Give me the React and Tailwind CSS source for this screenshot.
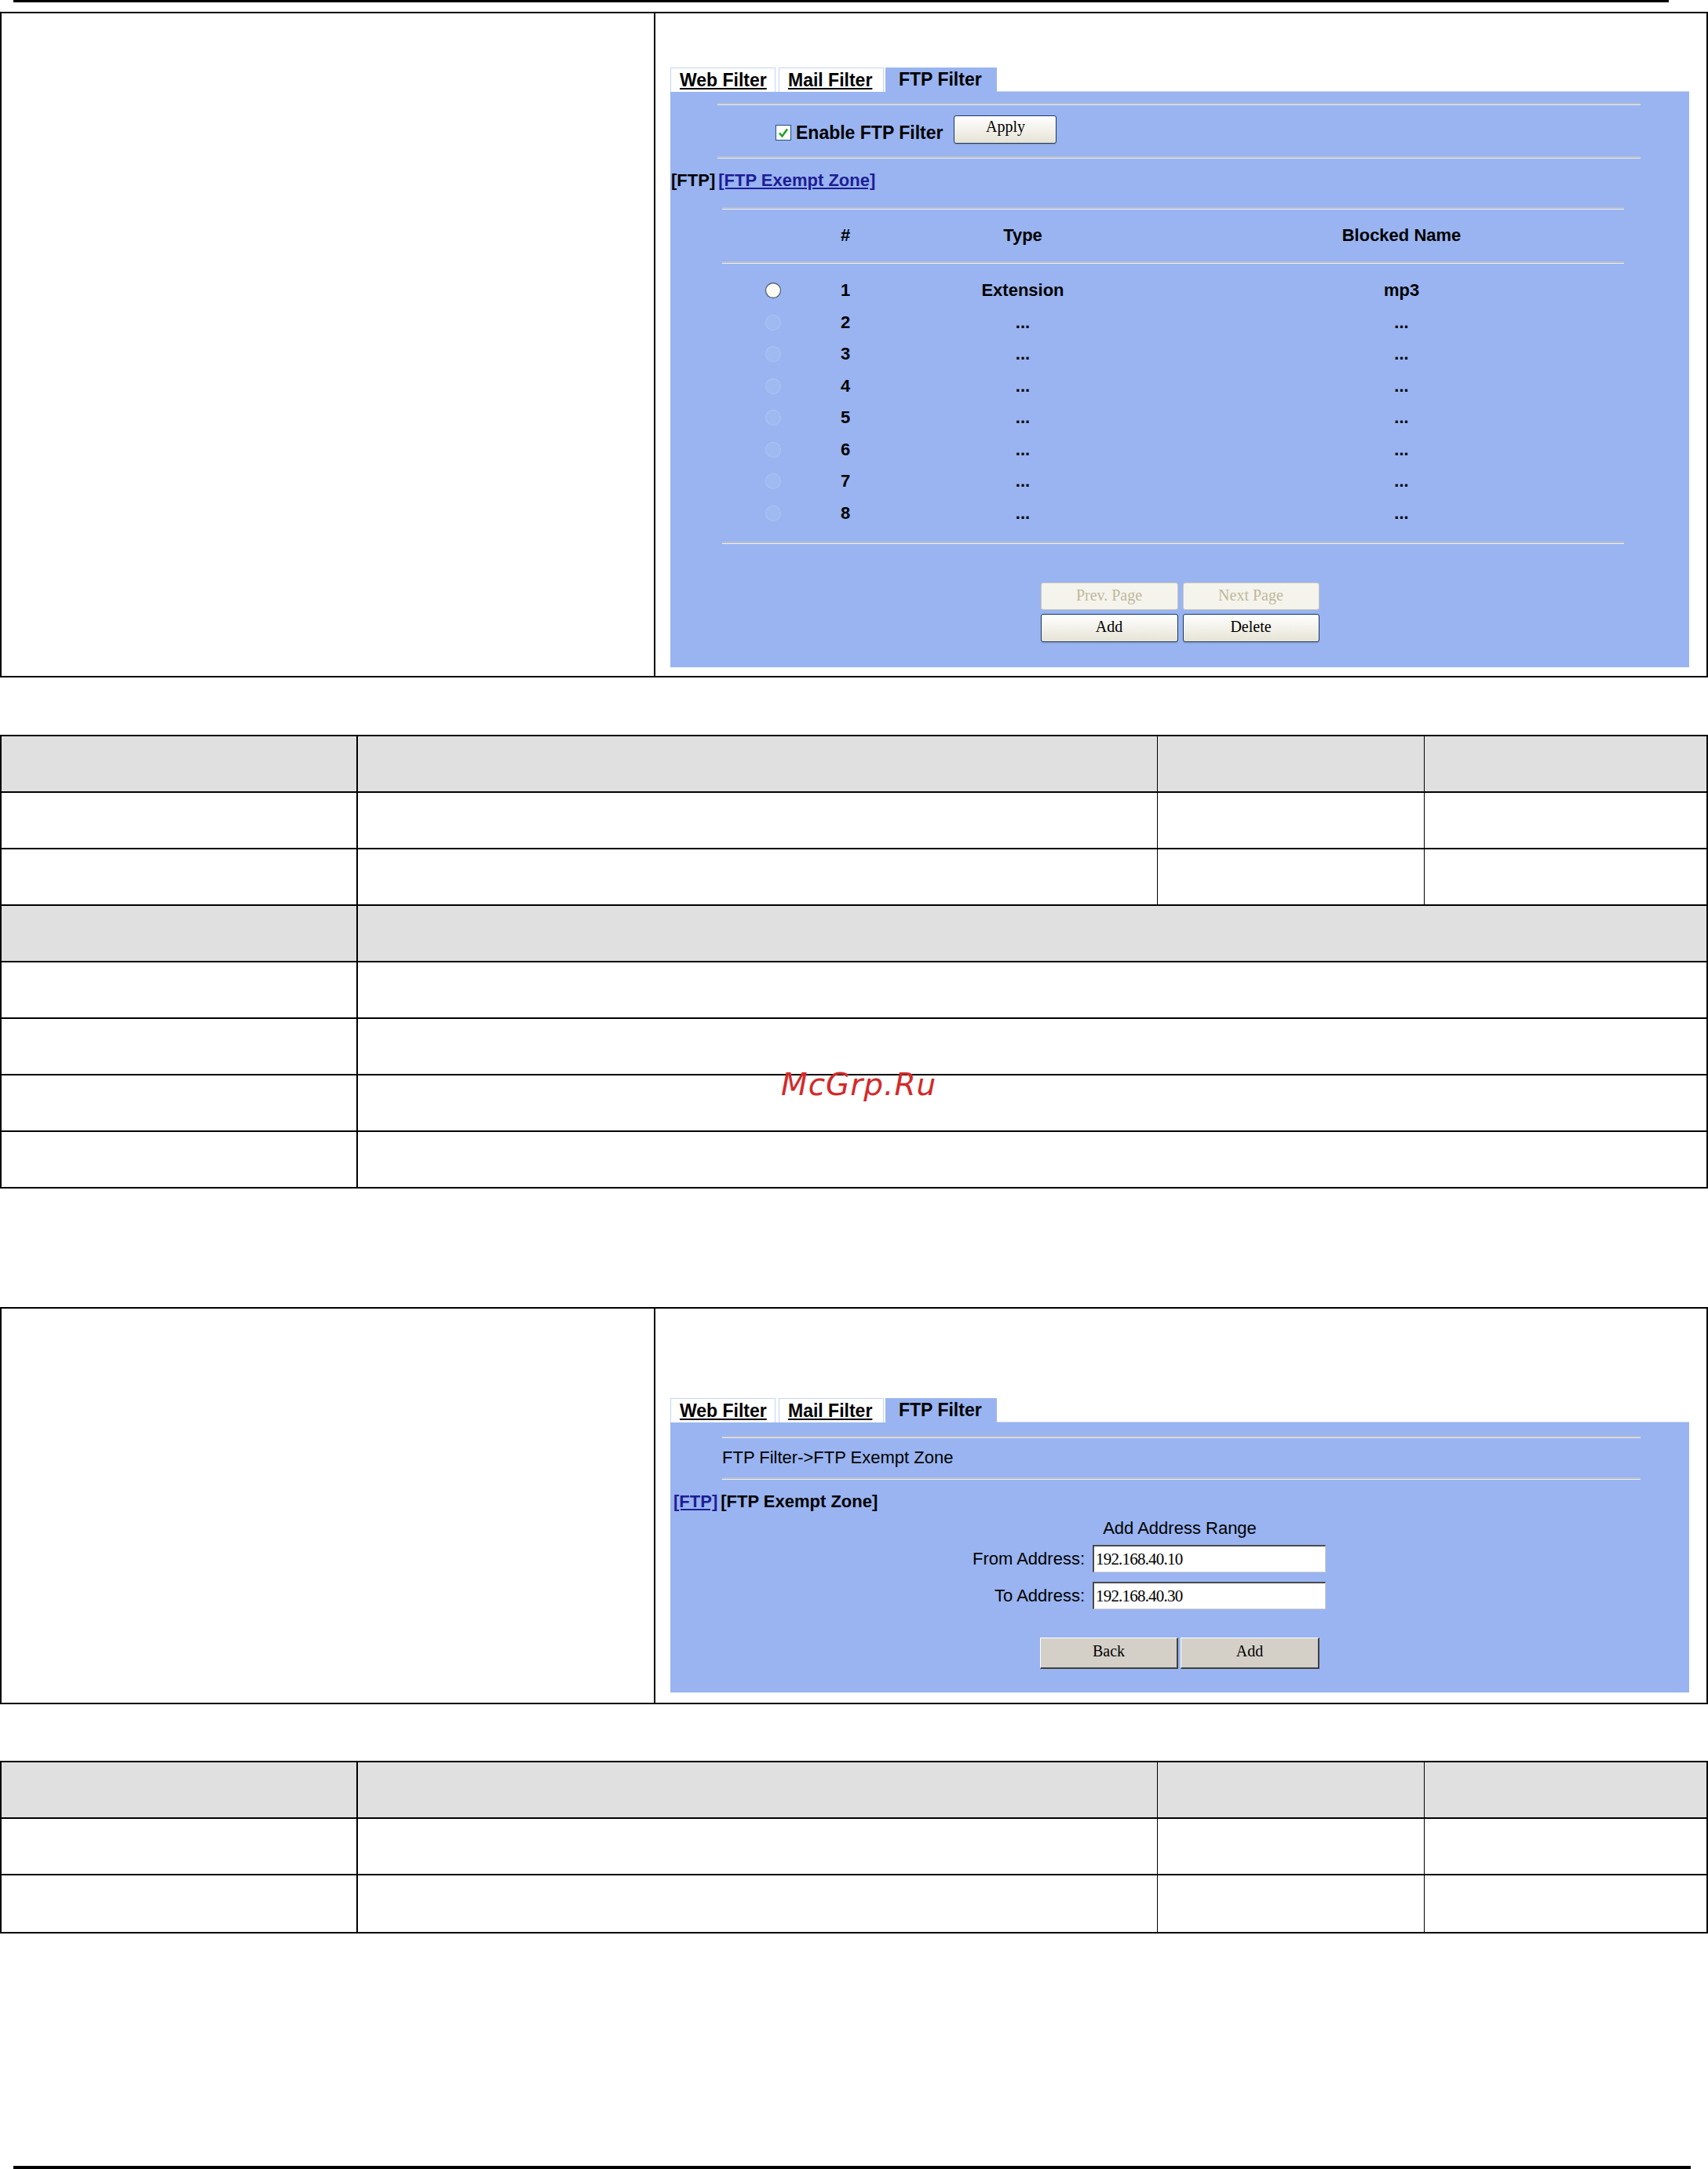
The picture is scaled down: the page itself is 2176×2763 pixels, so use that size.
import React from "react";

// groove style separator used inside the blue panels
function Hr({ className = "" }) {
  return (
    <div
      className={`h-[3px] border-t-2 border-t-[#b9bec9] border-b border-b-[#e6ecfb] ${className}`}
    />
  );
}

function Tabs() {
  return (
    <div className="flex h-[31px] text-[23px] font-bold leading-none">
      <div className="w-[134px] bg-white border border-b-0 border-[#c6d4f2] flex items-center pl-[11px]">
        <span className="underline underline-offset-2">Web Filter</span>
      </div>
      <div className="ml-[4px] w-[134px] bg-white border border-b-0 border-[#c6d4f2] flex items-center pl-[11px]">
        <span className="underline underline-offset-2">Mail Filter</span>
      </div>
      <div className="ml-[2px] w-[142px] bg-[#99b4f0] flex items-center pl-[17px]">
        FTP Filter
      </div>
      <div className="flex-1 border-b border-[#c9d6f3]" />
    </div>
  );
}

function XpButton({ children, disabled, className = "" }) {
  if (disabled) {
    return (
      <div
        className={`h-[35px] rounded-[3px] border border-[#c9c7ba] bg-[#f5f4ec] text-[#bfb89c] flex items-center justify-center pb-[4px] font-['Liberation_Serif',serif] text-[20px] ${className}`}
      >
        {children}
      </div>
    );
  }
  return (
    <div
      className={`h-[36px] rounded-[3px] border border-[#18375f] bg-linear-to-b from-white to-[#e6e3d5] shadow-[0_2px_0_#8fa6d6] flex items-center justify-center pb-[4px] font-['Liberation_Serif',serif] text-[20px] text-black ${className}`}
    >
      {children}
    </div>
  );
}

function ClassicButton({ children, className = "" }) {
  return (
    <div
      className={`h-[40px] bg-[#d4d0c8] border-t border-l border-t-white border-l-white border-b-2 border-r-2 border-b-[#404040] border-r-[#404040] flex items-center justify-center pb-[6px] font-['Liberation_Serif',serif] text-[20px] text-black ${className}`}
    >
      {children}
    </div>
  );
}

function Radio({ active }) {
  if (active) {
    return (
      <svg width="22" height="22" viewBox="0 0 22 22">
        <circle cx="11" cy="11" r="9.5" fill="#fbfbf4" stroke="#55657c" strokeWidth="1.3" />
      </svg>
    );
  }
  return (
    <svg width="22" height="22" viewBox="0 0 22 22">
      <circle cx="11" cy="11" r="9.5" fill="#9fb9f1" stroke="#a9c1f4" strokeWidth="1.3" />
    </svg>
  );
}

const rows = [
  { n: 1, type: "Extension", name: "mp3" },
  { n: 2, type: "...", name: "..." },
  { n: 3, type: "...", name: "..." },
  { n: 4, type: "...", name: "..." },
  { n: 5, type: "...", name: "..." },
  { n: 6, type: "...", name: "..." },
  { n: 7, type: "...", name: "..." },
  { n: 8, type: "...", name: "..." },
];

function FtpPanel() {
  return (
    <div className="bg-[#99b4f0] h-[733px] pt-[14px] text-[22px] leading-none">
      <Hr className="ml-[60px] mr-[62px]" />
      <div className="mt-[13px] h-[36px] flex items-center pl-[134px]">
        <div className="flex items-center pt-[8px]">
          <svg width="20" height="20" viewBox="0 0 20 20">
            <rect x="0.5" y="0.5" width="19" height="19" fill="#fff" stroke="#1c5180" />
            <path d="M5 10.5 L8.5 14.5 L15 5.5" stroke="#21a121" strokeWidth="2.6" fill="none" />
          </svg>
          <span className="ml-[6px] font-bold text-[23px]">Enable FTP Filter</span>
        </div>
        <XpButton className="ml-[14px] w-[131px] pb-[8px]">Apply</XpButton>
      </div>
      <Hr className="mt-[16px] ml-[60px] mr-[62px]" />
      <div className="mt-[15px] h-[26px] flex items-center pl-[1px] font-bold">
        <span>[FTP]</span>
        <span className="ml-[4px] text-[#1d1d96] underline underline-offset-2">[FTP Exempt Zone]</span>
      </div>
      <div className="ml-[66px] mr-[83px]">
        <Hr className="mt-[21px]" />
        <div className="h-[66px] grid grid-cols-[130px_54px_398px_1fr] items-center text-center font-bold">
          <div />
          <div>#</div>
          <div>Type</div>
          <div>Blocked Name</div>
        </div>
        <Hr />
        <div className="mt-[14px]">
          {rows.map((r) => (
            <div
              key={r.n}
              className="h-[40.5px] grid grid-cols-[130px_54px_398px_1fr] items-center text-center font-bold"
            >
              <div className="flex justify-center">
                <Radio active={r.n === 1} />
              </div>
              <div>{r.n}</div>
              <div>{r.type}</div>
              <div>{r.name}</div>
            </div>
          ))}
        </div>
        <Hr className="mt-[16px]" />
      </div>
      <div className="mt-[49px] flex flex-col items-center gap-[5px]">
        <div className="flex gap-[6px]">
          <XpButton disabled className="w-[175px]">Prev. Page</XpButton>
          <XpButton disabled className="w-[174px]">Next Page</XpButton>
        </div>
        <div className="flex gap-[6px]">
          <XpButton className="w-[175px]">Add</XpButton>
          <XpButton className="w-[174px]">Delete</XpButton>
        </div>
      </div>
    </div>
  );
}

function AddressInput({ value }) {
  return (
    <div className="ml-[10px] w-[297px] h-[35px] bg-white border-t-2 border-l-2 border-t-[#4a4a4a] border-l-[#4a4a4a] border-b border-r border-b-[#d4d0c8] border-r-[#d4d0c8] flex items-center pl-[2px] font-['Liberation_Serif',serif] text-[21px] tracking-[-0.8px]">
      {value}
    </div>
  );
}

function ExemptPanel() {
  return (
    <div className="bg-[#99b4f0] h-[344px] pt-[17px] text-[22px] leading-none">
      <Hr className="ml-[66px] mr-[62px]" />
      <div className="mt-[12px] h-[26px] flex items-center pl-[66px]">FTP Filter-&gt;FTP Exempt Zone</div>
      <Hr className="mt-[12px] ml-[66px] mr-[62px]" />
      <div className="mt-[15px] h-[26px] flex items-center pl-[4px] font-bold">
        <span className="text-[#1d1d96] underline underline-offset-2">[FTP]</span>
        <span className="ml-[4px]">[FTP Exempt Zone]</span>
      </div>
      <div className="mt-[8px] h-[26px] flex items-center justify-center">Add Address Range</div>
      <div className="mt-[8px] h-[35px] flex items-center">
        <div className="w-[528px] text-right">From Address:</div>
        <AddressInput value="192.168.40.10" />
      </div>
      <div className="mt-[12px] h-[35px] flex items-center">
        <div className="w-[528px] text-right">To Address:</div>
        <AddressInput value="192.168.40.30" />
      </div>
      <div className="mt-[36px] flex justify-center gap-[3px]">
        <ClassicButton className="w-[176px]">Back</ClassicButton>
        <ClassicButton className="w-[177px]">Add</ClassicButton>
      </div>
    </div>
  );
}

function ParamRow({ gray, last }) {
  return (
    <div className={`flex h-[72px] ${last ? "" : "border-b-2 border-black"} ${gray ? "bg-[#e0e0e0]" : ""}`}>
      <div className="w-[454px] border-r-2 border-black" />
      <div className="w-[1019px] border-r border-black" />
      <div className="w-[340px] border-r border-black" />
      <div className="flex-1" />
    </div>
  );
}

function MergedRow({ gray, last }) {
  return (
    <div className={`flex ${last ? "h-[70px]" : "h-[72px] border-b-2 border-black"} ${gray ? "bg-[#e0e0e0]" : ""}`}>
      <div className="w-[454px] border-r-2 border-black" />
      <div className="flex-1" />
    </div>
  );
}

export default function App() {
  return (
    <div className="relative flex flex-col w-[2176px] h-[2763px] bg-white text-black font-['Liberation_Sans',Arial,sans-serif] overflow-hidden">
      <div className="ml-[17px] w-[2109px] h-[3px] shrink-0 bg-black" />

      {/* screenshot table: FTP filter list */}
      <div className="mt-[12px] h-[848px] shrink-0 border-2 border-black flex">
        <div className="w-[833px] border-r-2 border-black" />
        <div className="flex-1 pt-[69px] pl-[19px] pr-[22px]">
          <Tabs />
          <FtpPanel />
        </div>
      </div>

      {/* parameter table */}
      <div className="mt-[73px] shrink-0 border-2 border-black">
        <ParamRow gray />
        <ParamRow />
        <ParamRow />
        <MergedRow gray />
        <MergedRow />
        <MergedRow />
        <MergedRow />
        <MergedRow last />
      </div>

      {/* screenshot table: exempt zone */}
      <div className="mt-[151px] h-[506px] shrink-0 border-2 border-black flex">
        <div className="w-[833px] border-r-2 border-black" />
        <div className="flex-1 pt-[114px] pl-[19px] pr-[22px]">
          <Tabs />
          <ExemptPanel />
        </div>
      </div>

      {/* parameter table */}
      <div className="mt-[72px] shrink-0 border-2 border-black">
        <ParamRow gray />
        <ParamRow />
        <ParamRow last />
      </div>

      <div className="mt-auto ml-[17px] w-[2137px] h-[4px] shrink-0 bg-black" />

      <div className="absolute left-[995px] top-[1362px] text-[39px] leading-none italic tracking-[1px] text-[#d32a2a] font-['DejaVu_Sans',sans-serif]">
        McGrp.Ru
      </div>
    </div>
  );
}
